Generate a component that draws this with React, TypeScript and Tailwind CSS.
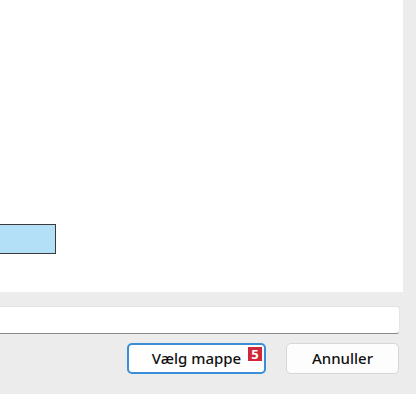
export default function App() {
  return (
    <div
      className="relative w-[416px] h-[394px] overflow-hidden bg-[#ececec] flex flex-col"
      style={{ fontFamily: '"Noto Sans", "Open Sans", sans-serif' }}
    >
      <div className="w-[403px] h-[292px] bg-white pt-[224px]">
        <div className="w-[56px] h-[30px] bg-[#b3e0f7] border border-l-0 border-[#3a3a3a]" />
      </div>

      <div className="mt-[14px] -ml-[4px] w-[404px] h-[28px] bg-white border border-[#e3e3e3] border-b-[#8a8a8a] rounded-[4px]" />

      <div className="mt-[9px] flex justify-end gap-[20px] pr-[17px]">
        <div className="relative w-[139px] h-[31px] rounded-[5px] border-2 border-[#3a8ed6] bg-white text-[15px] text-[#111111] font-medium flex items-center justify-center">
          <span>Vælg mappe</span>
          <span className="absolute right-[2px] top-[2px] w-[14px] h-[14px] bg-[#d02838] text-white text-[13px] font-bold leading-[14px] text-center">
            5
          </span>
        </div>
        <div className="w-[113px] h-[31px] rounded-[5px] border border-[#d6d6d6] bg-[#fdfdfd] text-[15px] text-[#111111] font-medium flex items-center justify-center">
          Annuller
        </div>
      </div>
    </div>
  );
}
